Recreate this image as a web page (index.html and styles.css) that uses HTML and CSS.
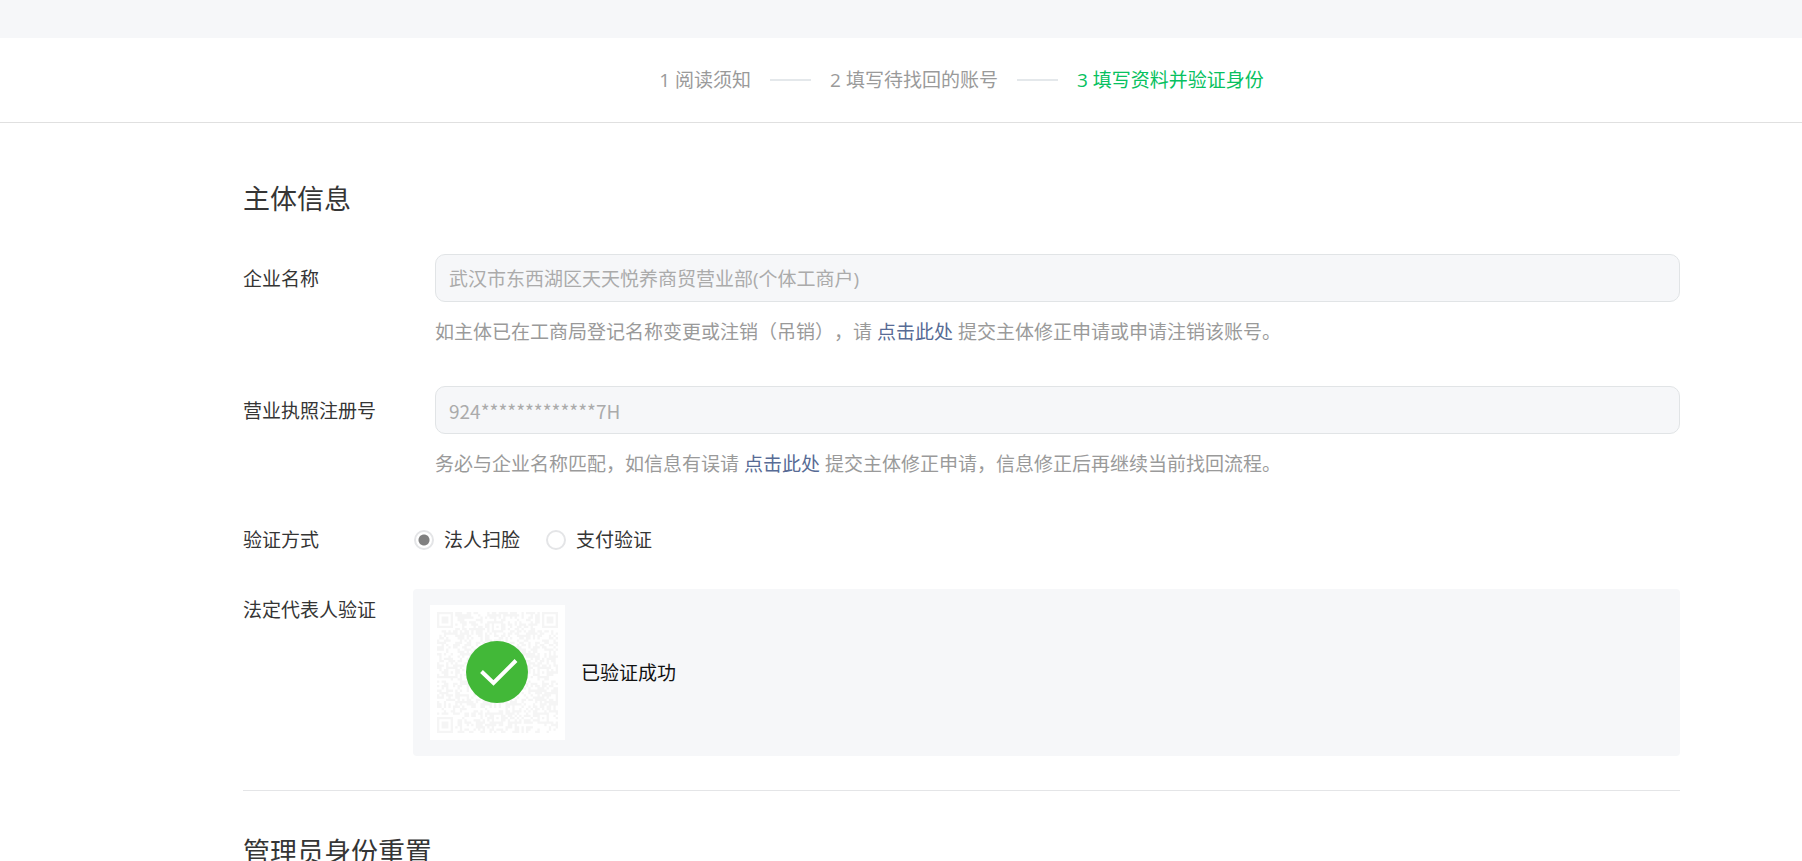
FILE: index.html
```html
<!DOCTYPE html>
<html lang="zh-CN">
<head>
<meta charset="utf-8">
<meta name="viewport" content="width=device-width, initial-scale=1">
<title>填写资料并验证身份</title>
<link rel="stylesheet" href="styles.css">
</head>
<body>
<div class="topband"></div>
<header class="header">
  <ol class="steps">
    <li class="step">1 阅读须知</li>
    <li class="step">2 填写待找回的账号</li>
    <li class="step step-active" aria-current="step">3 填写资料并验证身份</li>
  </ol>
</header>
<main class="content">
  <form class="form">
    <h2 class="title">主体信息</h2>
    <div class="row">
      <label class="label label-field" for="company">企业名称</label>
      <div class="field">
        <input class="input" id="company" type="text" value="武汉市东西湖区天天悦养商贸营业部(个体工商户)" disabled>
        <p class="help">如主体已在工商局登记名称变更或注销（吊销），请 <a class="link" href="#">点击此处</a> 提交主体修正申请或申请注销该账号。</p>
      </div>
    </div>
    <div class="row row-license">
      <label class="label label-field" for="license">营业执照注册号</label>
      <div class="field">
        <input class="input input-code" id="license" type="text" value="924*************7H" disabled>
        <p class="help">务必与企业名称匹配，如信息有误请 <a class="link" href="#">点击此处</a> 提交主体修正申请，信息修正后再继续当前找回流程。</p>
      </div>
    </div>
    <div class="row row-wide row-method" role="radiogroup" aria-labelledby="method-label">
      <span class="label" id="method-label">验证方式</span>
      <div class="radios">
        <label class="option"><input class="radio" type="radio" name="method" checked>法人扫脸</label>
        <label class="option"><input class="radio" type="radio" name="method">支付验证</label>
      </div>
    </div>
    <div class="row row-wide row-verify">
      <span class="label label-verify">法定代表人验证</span>
      <div class="panel">
        <div class="qr">
          <svg class="qr-svg" viewBox="0 0 135 135" role="img" aria-label="已验证">
            <g transform="translate(7 7) scale(2.283)"><path id="modules" class="qr-modules"/></g>
            <circle class="ok-disc" cx="67" cy="67" r="31"/>
            <path class="ok-tick" d="M51.5 66.5 63.5 78 86 55.5"/>
          </svg>
        </div>
        <span class="status">已验证成功</span>
      </div>
    </div>
    <hr class="divider">
    <h2 class="title">管理员身份重置</h2>
  </form>
</main>
<script src="qr.js"></script>
</body>
</html>
```

FILE: styles.css
```css
* {
  box-sizing: border-box;
}

body {
  margin: 0;
  background: #fff;
  color: #353535;
  font-family: "Open Sans", "Noto Sans CJK SC", sans-serif;
  font-size: 19px;
  line-height: 28px;
  text-spacing-trim: space-all;
}

.topband {
  height: 38px;
  background: #f6f7f9;
}

.header {
  padding: 28px 122px 28px 243px;
  border-bottom: 1px solid #e0e0e0;
}

.steps {
  display: flex;
  justify-content: center;
  margin: 0;
  padding: 0;
  list-style: none;
  color: #9a9a9a;
}

.step {
  display: flex;
  align-items: center;
}

.step + .step::before {
  content: "";
  width: 41px;
  height: 2px;
  margin: 0 19px;
  background: #e4e8eb;
}

.step-active {
  color: #07c160;
}

.content {
  padding: 58px 122px 60px 243px;
}

.title {
  margin: 0;
  font-size: 27px;
  font-weight: 400;
  line-height: 36px;
}

.row {
  display: grid;
  grid-template-columns: 192px minmax(0, 1fr);
  align-items: start;
  margin-top: 37px;
}

.row-wide {
  grid-template-columns: 170px minmax(0, 1fr);
}

.row-license {
  margin-top: 40px;
}

.row-method {
  margin-top: 48px;
}

.row-verify {
  margin-top: 35px;
}

.label-field {
  padding-top: 11px;
}

.label-verify {
  padding-top: 7px;
}

.input {
  display: block;
  width: 100%;
  height: 48px;
  padding: 0 13px;
  border: 1px solid #e1e4e6;
  border-radius: 10px;
  background: #f6f7f9;
  color: #ababab;
  font-family: inherit;
  font-size: 19px;
}

.input-code {
  font-family: "Noto Sans CJK SC", sans-serif;
}

.help {
  margin: 16px 0 0;
  color: #9a9a9a;
}

.link {
  color: #576b95;
  text-decoration: none;
}

.radios {
  display: flex;
  gap: 25px;
}

.option {
  display: flex;
  align-items: center;
  gap: 10px;
}

.radio {
  appearance: none;
  width: 20px;
  height: 20px;
  margin: 0 0 0 1px;
  border: 2px solid #e4e5e7;
  border-radius: 50%;
  background: #fff;
}

.radio:checked {
  background: radial-gradient(circle, #808080 5px, #fff 6px);
}

.panel {
  display: flex;
  align-items: center;
  gap: 16px;
  padding: 16px 17px;
  border-radius: 4px;
  background: #f6f7f9;
}

.qr {
  width: 135px;
  height: 135px;
  background: #fff;
}

.qr-svg {
  display: block;
  width: 100%;
}

.qr-modules {
  fill: #f5f5f5;
}

.ok-disc {
  fill: #42b838;
}

.ok-tick {
  fill: none;
  stroke: #fff;
  stroke-width: 4;
}

.status {
  color: #111;
}

.divider {
  height: 1px;
  margin: 34px 0 43px;
  border: 0;
  background: #e4e5e7;
}
```

FILE: qr.js
```js
// Fills in the faded QR code: 53 x 53 modules, finder and alignment squares.
const SIZE = 53;
let seed = 20417;
const grid = Array.from({ length: SIZE }, () =>
  Array.from({ length: SIZE }, () => {
    seed = (seed * 1103515245 + 12345) % 2147483648;
    return seed / 2147483648 < 0.5;
  })
);

function square(cx, cy, rings, radius) {
  for (let y = -radius; y <= radius; y++) {
    for (let x = -radius; x <= radius; x++) {
      const row = grid[cy + y];
      if (row && cx + x >= 0 && cx + x < SIZE) {
        row[cx + x] = rings.includes(Math.max(Math.abs(x), Math.abs(y)));
      }
    }
  }
}

[[3, 3], [49, 3], [3, 49]].forEach(([x, y]) => square(x, y, [0, 1, 3], 4));
[[26, 6], [6, 26], [46, 26], [26, 46], [46, 46]].forEach(([x, y]) => square(x, y, [0, 2], 2));

let d = "";
grid.forEach((row, y) => row.forEach((on, x) => {
  if (on) d += `M${x} ${y}h1v1h-1z`;
}));
document.getElementById("modules").setAttribute("d", d);
```
